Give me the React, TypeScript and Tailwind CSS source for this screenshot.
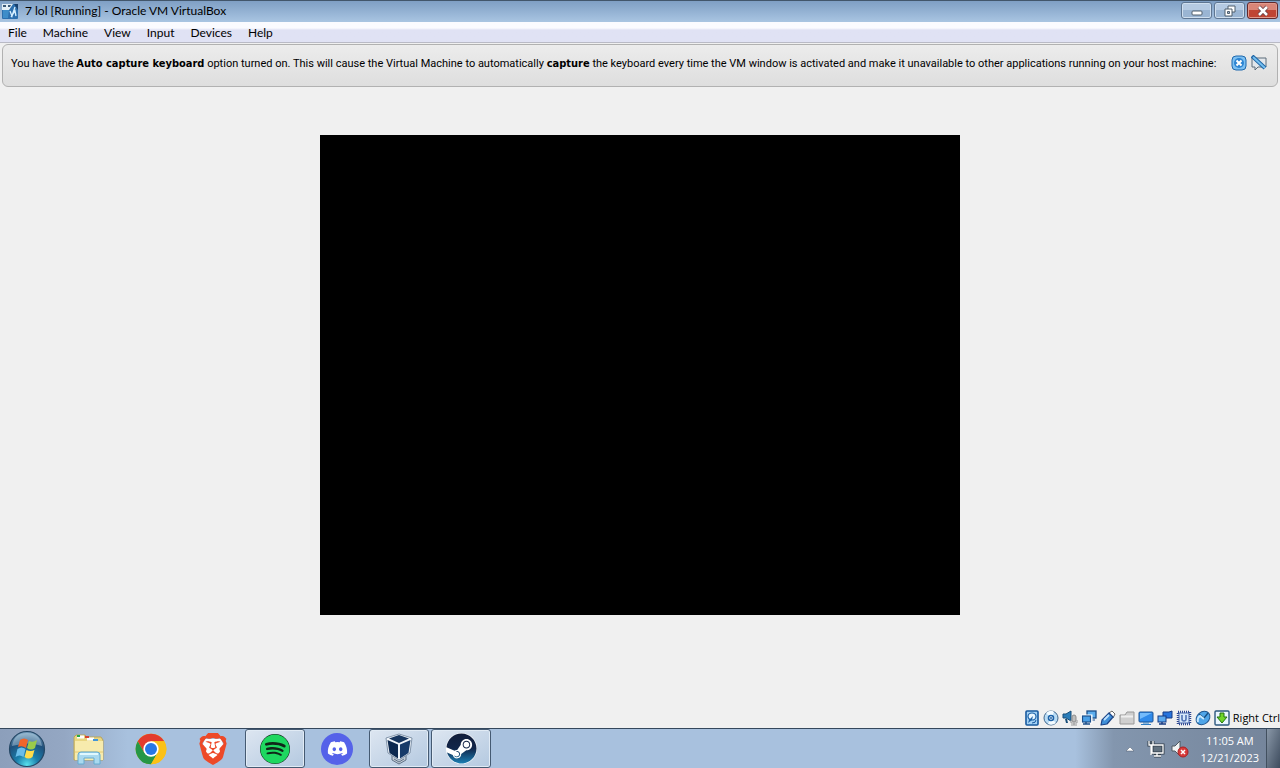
import { FaDiscord, FaSpotify, FaSteam } from "react-icons/fa6";
import { SiBrave } from "react-icons/si";
import type { ReactNode } from "react";

const menus = ["File", "Machine", "View", "Input", "Devices", "Help"];

function VmIcon() {
  return (
    <svg width="16" height="16" viewBox="0 0 16 16" aria-hidden="true">
      <rect x="0" y="1" width="16" height="15" rx="1" fill="#2c6fae" />
      <path d="M0 1h11L7 7H0z" fill="#e4eef5" />
      <path d="M1 2h3v2H1zM6 2h3L8 4H6z" fill="#3b5877" />
      <path d="M12 1h4v6z" fill="#173f6d" />
      <path d="M1 7h6l-1 8H1z" fill="#3e8dc9" />
      <path d="M8 8l2 5 3-9M9 14l4-6 1 5" stroke="#d6efff" strokeWidth="1.3" fill="none" />
    </svg>
  );
}

const statusIcons: { label: string; art: ReactNode }[] = [
  {
    label: "Hard disks",
    art: (
      <>
        <rect x="2" y="1" width="12" height="14" rx="1" fill="#a5d2f5" stroke="#17599f" strokeWidth="1.6" />
        <ellipse cx="8" cy="6.500" rx="4" ry="3.500" fill="#e9f6ff" stroke="#1c62a8" strokeWidth="1.2" />
        <path d="M4 13l1-3 4-4-1 4z" fill="#1c62a8" />
        <path d="M8 13q4 0 4-3" stroke="#17599f" fill="none" />
      </>
    ),
  },
  {
    label: "Optical drives",
    art: (
      <>
        <circle cx="8" cy="8" r="7" fill="#b9dcf5" stroke="#3f678e" />
        <path d="M8 8L3 3q5-4 8-1zM8 8l5 5q-4 3-8 1z" fill="#f3fbff" />
        <circle cx="8" cy="8" r="2.500" fill="#fff" stroke="#1c62a8" strokeWidth="1.6" />
        <circle cx="8" cy="8" r="1" fill="#1c62a8" />
      </>
    ),
  },
  {
    label: "Audio",
    art: (
      <>
        <path d="M1 4h3l5-3v10L4 8H1z" fill="#2a7cb8" stroke="#174d78" />
        <path d="M3 9l1 4h2L5 9" fill="#174d78" />
        <rect x="10" y="5" width="4" height="7" rx="2" fill="#bdbdbd" stroke="#8b8b8b" />
        <path d="M9 10v3h6v-3M12 13v2M9 15h6" stroke="#999" fill="none" />
      </>
    ),
  },
  {
    label: "Network",
    art: (
      <>
        <rect x="6" y="1" width="9" height="7" fill="#5daeee" stroke="#1b4f8b" strokeWidth="1.3" />
        <path d="M8 10h6" stroke="#1b4f8b" />
        <rect x="1" y="6" width="9" height="6" fill="#4aa0e7" stroke="#fff" strokeWidth="3" />
        <rect x="1.500" y="6" width="8" height="6" fill="#4aa0e7" stroke="#1b4f8b" strokeWidth="1.2" />
        <path d="M5 12v2M2 14h7" stroke="#1b4f8b" strokeWidth="1.5" />
      </>
    ),
  },
  {
    label: "USB",
    art: (
      <>
        <path d="M9 3l3-2 3 3-2 4z" fill="#fff" stroke="#666" />
        <path d="M1 15L2 10 9 3l4 4-6 7z" fill="#3f8fd8" stroke="#1b4488" strokeWidth="1.2" strokeLinejoin="round" />
        <path d="M4 10l5-5" stroke="#bde2ff" strokeWidth="1.8" />
      </>
    ),
  },
  {
    label: "Shared folders",
    art: (
      <>
        <path d="M1 14V5h5l2-3h7v12z" fill="#cfcfcf" stroke="#989898" strokeLinejoin="round" />
        <path d="M2 6.500h12" stroke="#efefef" strokeWidth="2" />
      </>
    ),
  },
  {
    label: "Display",
    art: (
      <>
        <rect x="1" y="2" width="14" height="10" rx="1" fill="#2f8aea" stroke="#1f5493" />
        <path d="M2 3h12L2 9z" fill="#74bbfb" />
        <path d="M5 13h6M3 14.500h10" stroke="#2f7ec4" />
      </>
    ),
  },
  {
    label: "Recording",
    art: (
      <>
        <path d="M6 2h6l3-1v7H6z" fill="#2874dd" stroke="#163b83" />
        <rect x="1" y="6" width="8" height="6" fill="#5ba9ee" stroke="#163b83" />
        <path d="M5 12v2M2 14h7" stroke="#163b83" strokeWidth="1.4" />
      </>
    ),
  },
  {
    label: "Processor",
    art: (
      <>
        <rect x="2" y="2" width="12" height="12" fill="none" stroke="#2d4690" strokeWidth="2.500" strokeDasharray="1 1" />
        <rect x="3" y="3" width="10" height="10" fill="#d6e8fb" stroke="#4867aa" />
        <path d="M6 5v4q0 2 2 2t2-2V5" stroke="#5273b4" strokeWidth="1.6" fill="none" />
      </>
    ),
  },
  {
    label: "Mouse integration",
    art: (
      <>
        <ellipse cx="8" cy="8" rx="7.500" ry="6" transform="rotate(-40 8 8)" fill="#4fa5e8" stroke="#1f568f" />
        <path d="M4 4l5 4 4-5" stroke="#174f83" strokeWidth="1.300" fill="none" />
        <path d="M3 12q-1-4 2-6l4 3" stroke="#c9e9ff" strokeWidth="2" fill="none" />
      </>
    ),
  },
  {
    label: "Keyboard capture",
    art: (
      <>
        <rect x="1" y="1" width="14" height="14" rx="1" fill="#eaf6ff" stroke="#2c587f" strokeWidth="1.4" />
        <path d="M6 3h4v4h3l-5 6-5-6h3z" fill="#70d52a" stroke="#23720f" />
      </>
    ),
  },
];

function Windows() {
  return (
    <svg width="38" height="38" viewBox="0 0 38 38" aria-hidden="true">
      <defs>
        <radialGradient id="orb" cx=".5" cy=".95" r=".9">
          <stop stopColor="#59e1ed" />
          <stop offset=".35" stopColor="#1a7fac" />
          <stop offset=".75" stopColor="#1f4f7b" />
          <stop offset="1" stopColor="#6f98b8" />
        </radialGradient>
      </defs>
      <circle cx="19" cy="19" r="17.500" fill="url(#orb)" stroke="#244765" strokeWidth="1.2" />
      <path d="M4 16Q6 3 19 3t15 13q-13-5-30 0z" fill="#d3e9f2" opacity=".4" />
      <path d="M12 10q4-3 8 0l-2 8q-4-3-8-1z" fill="#f0652a" />
      <path d="M21 11q4 2 8-1l-2 8q-4 3-8 0z" fill="#9acb4b" />
      <path d="M9.500 19q4-3 8 0l-2 8q-4-3-8 0z" fill="#69bdea" />
      <path d="M18.500 20q4 2 8 0l-2 7q-4 3-8 0z" fill="#ffdc4b" />
    </svg>
  );
}

function Explorer() {
  return (
    <svg width="34" height="34" viewBox="0 0 34 34" aria-hidden="true">
      <path d="M2 5l2-2h9l2 2h14l2 3v20H2z" fill="#e9d681" stroke="#b8a45c" />
      <path d="M5 5h7M15 7h7" stroke="#fff" strokeWidth="3" />
      <path d="M5 4h3" stroke="#25a849" strokeWidth="2" />
      <path d="M13 5h4" stroke="#d54332" strokeWidth="2" />
      <path d="M21 8h5" stroke="#4396d7" strokeWidth="2" />
      <path d="M3 9h28v19H3z" fill="#f7ebad" />
      <path d="M3 20h28" stroke="#e4ca74" />
      <path d="M6 32v-9q0-3 3-3h16q3 0 3 3v9h-6v-6H12v6z" fill="#a9d9ef" stroke="#65abd0" />
      <path d="M8 22h18" stroke="#e0f8ff" strokeWidth="2" />
    </svg>
  );
}

function Chrome() {
  return (
    <svg width="32" height="32" viewBox="0 0 48 48" aria-hidden="true">
      <circle cx="24" cy="24" r="23" fill="#fbc116" />
      <path d="M4.080 12.500A23 23 0 0 1 43.920 12.500H24L14.040 29.750z" fill="#e33b2e" />
      <path d="M4.080 12.500A23 23 0 0 0 24 47l9.960-17.250H14.040z" fill="#269746" />
      <path d="M43.920 12.500A23 23 0 0 1 24 47l9.960-17.250L24 12.500z" fill="#fbc116" />
      <circle cx="24" cy="24" r="11.500" fill="#fff" />
      <circle cx="24" cy="24" r="9" fill="#2777e5" />
    </svg>
  );
}

function VirtualBox() {
  return (
    <svg width="32" height="32" viewBox="0 0 32 32" aria-hidden="true">
      <path d="M9 22v5l7 4 7-4v-5z" fill="#c3ccd6" stroke="#5f7186" />
      <path d="M11 26l5 3 5-3" fill="none" stroke="#5f7186" />
      <path d="M3 5l13-4 13 4-2 15-11 7L5 20z" fill="#f0f5fa" stroke="#6c8098" strokeWidth=".8" />
      <path d="M6 5.500l10-3.500 10 3.500-10 4.500z" fill="#17365f" />
      <path d="M4.500 7l10.500 4.500v14L6.500 20z" fill="#0d2950" />
      <path d="M27.500 7L17 11.500v14L25.500 20z" fill="#173b69" />
    </svg>
  );
}

function Steam() {
  return (
    <span className="flex rounded-full bg-white">
      <svg width="0" height="0" aria-hidden="true">
        <defs>
          <linearGradient id="steam" x1="0" y1="0" x2="0" y2="1">
            <stop stopColor="#111d3a" />
            <stop offset=".5" stopColor="#11264a" />
            <stop offset="1" stopColor="#1b7fb4" />
          </linearGradient>
        </defs>
      </svg>
      <FaSteam className="size-[31px]" fill="url(#steam)" />
    </span>
  );
}

const tasks: { label: string; art: ReactNode; open: boolean }[] = [
  { label: "Windows Explorer", art: <Explorer />, open: false },
  { label: "Google Chrome", art: <Chrome />, open: false },
  {
    label: "Brave",
    art: (
      <span className="grid">
        <svg width="32" height="32" viewBox="0 0 32 32" className="col-start-1 row-start-1" aria-hidden="true">
          <path d="M8 6h16l2 5-3 11-7 6-7-6-3-11z" fill="#fff" />
        </svg>
        <SiBrave className="col-start-1 row-start-1 size-8 text-[#ed4928]" />
      </span>
    ),
    open: false,
  },
  {
    label: "Spotify",
    art: <FaSpotify className="size-[30px] rounded-full bg-[#102719] text-[#1ed760]" />,
    open: true,
  },
  {
    label: "Discord",
    art: (
      <span className="flex size-8 items-center justify-center rounded-full bg-[#5562e9]">
        <FaDiscord className="size-[21px] text-white" />
      </span>
    ),
    open: false,
  },
  { label: "Oracle VM VirtualBox", art: <VirtualBox />, open: true },
  { label: "Steam", art: <Steam />, open: true },
];

const winButton =
  "flex h-[17px] w-[31px] items-center justify-center rounded-[3px] border border-[#5f7692] bg-linear-to-b from-[#b5cae2] from-50% to-[#9ab5d3] to-50% shadow-[inset_0_0_0_1px_#cfdfef]";

export default function App() {
  return (
    <div className="flex min-h-screen flex-col bg-[#f0f0f0] font-['Open_Sans',sans-serif] text-black">
      <header className="flex h-[22px] items-center border-t border-[#42566b] bg-linear-to-b from-[#7f9fc4] to-[#a9c5e2] pb-[2px] pl-[2px]">
        <VmIcon />
        <h1 className="ml-[7px] flex-1 font-['Lato',sans-serif] text-[12px] leading-4">
          7 lol [Running] - Oracle VM VirtualBox
        </h1>
        <div className="flex gap-[2px] pr-[2px]">
          <button aria-label="Minimize" className={winButton}>
            <svg width="14" height="12" viewBox="0 0 14 12">
              <rect x="2" y="6" width="10" height="4" rx="1" fill="#fff" stroke="#4f5e6d" />
            </svg>
          </button>
          <button aria-label="Restore" className={winButton}>
            <svg width="14" height="12" viewBox="0 0 14 12">
              <path d="M5 1h7v6H5z" fill="#fff" stroke="#4f5e6d" />
              <path d="M2 4h7v7H2z" fill="#fff" stroke="#4f5e6d" />
              <path d="M4.500 6.500h2v2h-2z" fill="#9eb6cf" stroke="#4f5e6d" />
            </svg>
          </button>
          <button
            aria-label="Close"
            className="flex h-[17px] w-[31px] items-center justify-center rounded-[3px] border border-[#62292c] bg-linear-to-b from-[#d98577] from-50% to-[#bf4433] to-50% shadow-[inset_0_0_0_1px_#e09a8d]"
          >
            <svg width="14" height="12" viewBox="0 0 14 12">
              <path d="M3 2l8 8M11 2l-8 8" stroke="#633c43" strokeWidth="4" />
              <path d="M3 2l8 8M11 2l-8 8" stroke="#fff" strokeWidth="2.500" />
            </svg>
          </button>
        </div>
      </header>

      <nav className="flex h-[21px] items-center gap-4 border-b border-[#b9bac5] bg-linear-to-b from-[#fafbff] from-30% to-[#e0e2f4] to-40% pt-[2px] pl-2 font-['Lato',sans-serif] text-[12px] leading-4">
        {menus.map((menu) => (
          <button key={menu}>{menu}</button>
        ))}
      </nav>

      <section className="mx-[2px] mt-px flex h-[43px] items-start rounded-[6px] border border-[#b1b1b1] bg-linear-to-b from-[#ececec] to-[#dedede] pt-[10px] pr-[10px] pl-2">
        <p className="flex-1 font-['Roboto',sans-serif] text-[11px] leading-[18px] whitespace-nowrap">
          You have the <b className="font-['DejaVu_Sans_Condensed','DejaVu_Sans',sans-serif]">Auto capture keyboard</b>{" "}
          option turned on. This will cause the Virtual Machine to automatically{" "}
          <b className="font-['DejaVu_Sans_Condensed','DejaVu_Sans',sans-serif]">capture</b> the keyboard every time the
          VM window is activated and make it unavailable to other applications running on your host machine:
        </p>
        <div className="flex gap-1">
          <button aria-label="Close message">
            <svg width="16" height="16" viewBox="0 0 16 16">
              <rect x="1" y="1" width="14" height="14" rx="4" fill="#7dc0f2" stroke="#1f69ad" />
              <circle cx="8" cy="8" r="5" fill="#2d84d2" />
              <path d="M5.500 5.500l5 5M10.500 5.500l-5 5" stroke="#fff" strokeWidth="2" />
            </svg>
          </button>
          <button aria-label="Do not show again">
            <svg width="16" height="16" viewBox="0 0 16 16">
              <path d="M1 3h14v9H7l-3 3v-3H1z" fill="#e3e7eb" stroke="#5d6c7a" />
              <path d="M1 1l13 12" stroke="#1e65a5" strokeWidth="4" />
              <path d="M2 2l12 11" stroke="#75bff0" strokeWidth="2" />
            </svg>
          </button>
        </div>
      </section>

      <main className="flex flex-1 items-start justify-center py-12">
        <div role="img" aria-label="Virtual machine screen" className="aspect-4/3 w-1/2 bg-black" />
      </main>

      <footer className="flex h-5 items-center justify-end gap-[3px]">
        {statusIcons.map(({ label, art }) => (
          <button key={label} aria-label={label}>
            <svg width="16" height="16" viewBox="0 0 16 16">
              {art}
            </svg>
          </button>
        ))}
        <span className="text-[11px] leading-4">Right Ctrl</span>
      </footer>

      <div className="flex h-10 items-stretch border-t border-[#34475c] bg-[linear-gradient(90deg,#8c9fbb_0%,#94a7c3_5%,#a8c1de_10%,#a8c1de_84%,#8396ae_87%,#74849a_100%)]">
        <button aria-label="Start" className="flex w-[54px] items-center justify-center">
          <Windows />
        </button>
        <div className="ml-[5px] flex flex-1 gap-[2px]">
          {tasks.map(({ label, art, open }) => (
            <button
              key={label}
              aria-label={label}
              className={
                open
                  ? "flex w-[60px] items-center justify-center rounded-[3px] border border-[#455a72] bg-linear-to-br from-[#dde6f1] to-[#b4c9e0] shadow-[inset_0_0_0_1px_#e1ebf5]"
                  : "flex w-[60px] items-center justify-center"
              }
            >
              {art}
            </button>
          ))}
        </div>
        <div className="flex items-center text-white">
          <button aria-label="Show hidden icons">
            <svg width="10" height="8" viewBox="0 0 10 8">
              <path d="M1 6l4-4 4 4z" fill="#fff" stroke="#4c5b6c" strokeWidth=".5" />
            </svg>
          </button>
          <button aria-label="Network" className="ml-3">
            <svg width="18" height="18" viewBox="0 0 18 18">
              <path d="M5 5h11v8H5zM10 13v3M7 16h7M2 1v4h4V1" fill="#61717f" stroke="#303d48" strokeWidth="3" />
              <path d="M5 5h11v8H5zM10 13v3M7 16h7M2 1v4h4V1M4 5v10" fill="none" stroke="#fff" strokeWidth="1.300" />
            </svg>
          </button>
          <button aria-label="Volume muted" className="ml-[6px]">
            <svg width="18" height="18" viewBox="0 0 18 18">
              <path d="M1 6h3l5-5v15l-5-5H1z" fill="#f3f3f3" stroke="#4f5961" />
              <circle cx="12" cy="12" r="5" fill="#d83b3b" stroke="#a92022" />
              <path d="M10 10l4 4M14 10l-4 4" stroke="#fff" strokeWidth="1.500" />
            </svg>
          </button>
          <time dateTime="2023-12-21T11:05" className="ml-3 text-center text-[11px] leading-[17px]">
            11:05 AM
            <br />
            12/21/2023
          </time>
          <button
            aria-label="Show desktop"
            className="ml-[7px] h-full w-[14px] border-l border-[#42505f] bg-linear-to-br from-[#8a98a8] to-[#3e4c5e]"
          />
        </div>
      </div>
    </div>
  );
}
